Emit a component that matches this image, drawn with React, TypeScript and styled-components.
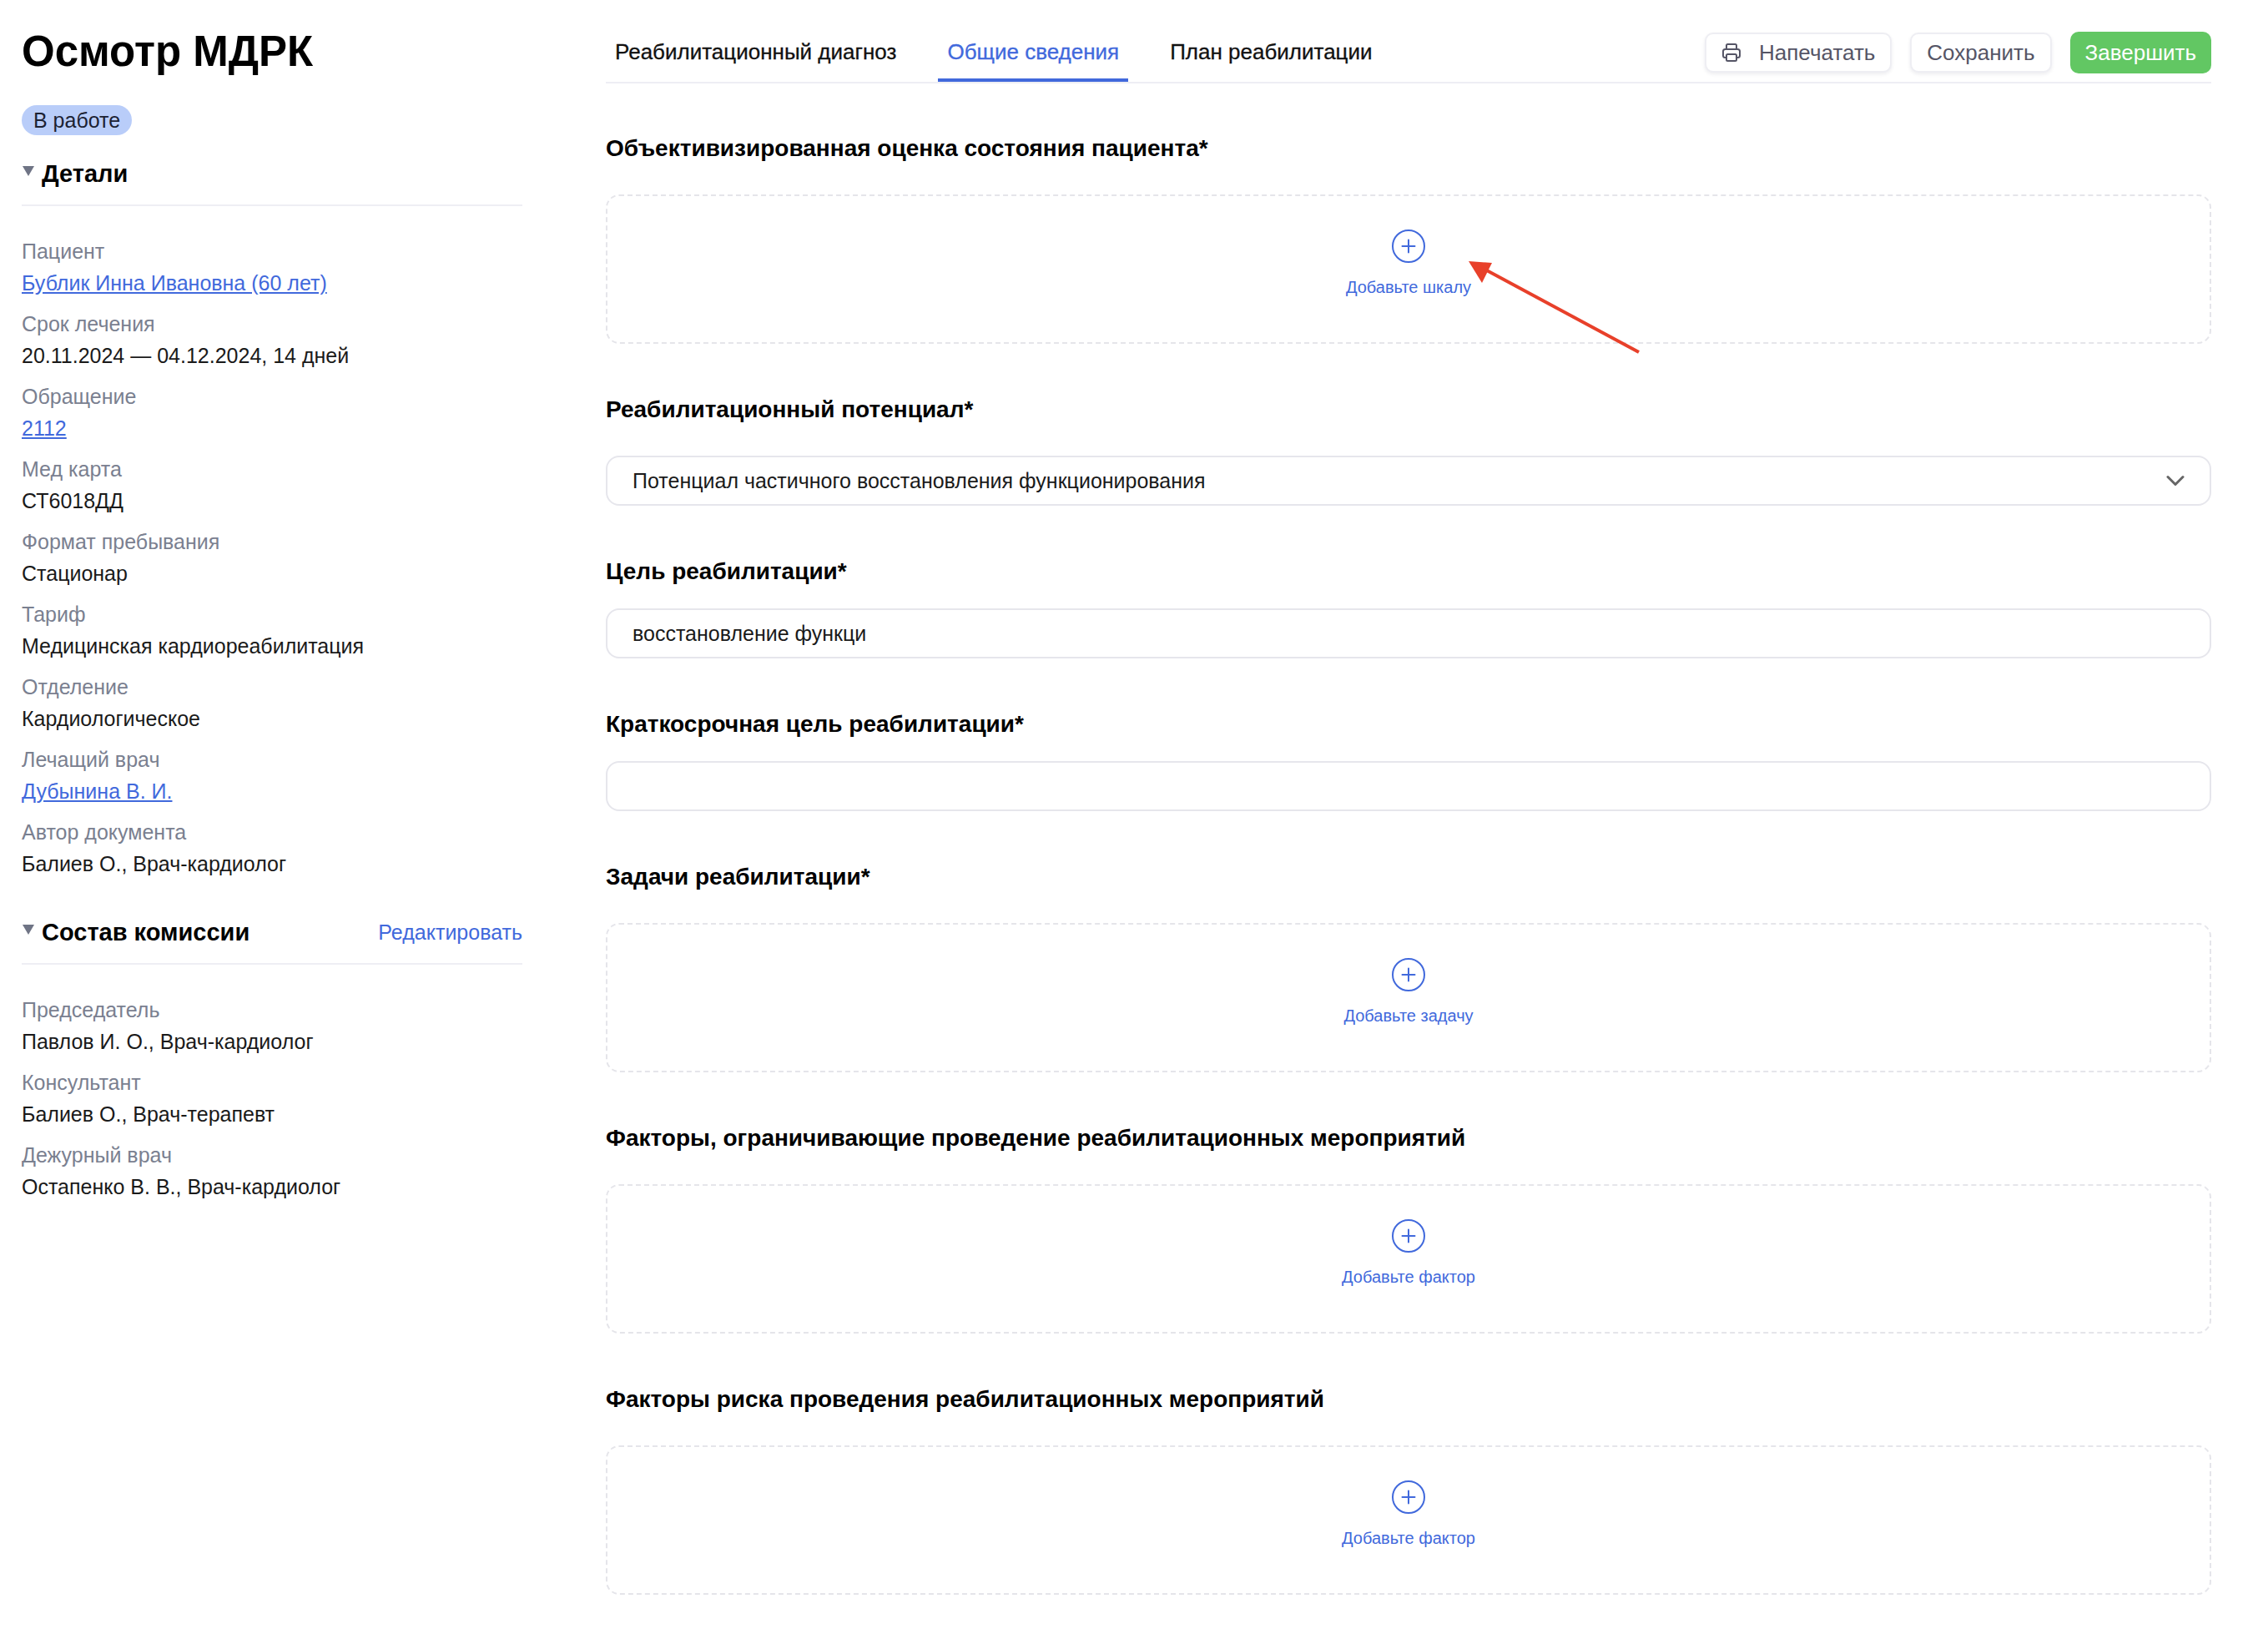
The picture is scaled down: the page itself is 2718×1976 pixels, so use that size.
import React, { FunctionComponent } from 'react';
import styled, { createGlobalStyle } from 'styled-components';

const details = [
  { label: 'Пациент', value: 'Бублик Инна Ивановна (60 лет)', link: true },
  { label: 'Срок лечения', value: '20.11.2024 — 04.12.2024, 14 дней' },
  { label: 'Обращение', value: '2112', link: true },
  { label: 'Мед карта', value: 'СТ6018ДД' },
  { label: 'Формат пребывания', value: 'Стационар' },
  { label: 'Тариф', value: 'Медицинская кардиореабилитация' },
  { label: 'Отделение', value: 'Кардиологическое' },
  { label: 'Лечащий врач', value: 'Дубынина В. И.', link: true },
  { label: 'Автор документа', value: 'Балиев О., Врач-кардиолог' },
];

const commission = [
  { label: 'Председатель', value: 'Павлов И. О., Врач-кардиолог' },
  { label: 'Консультант', value: 'Балиев О., Врач-терапевт' },
  { label: 'Дежурный врач', value: 'Остапенко В. В., Врач-кардиолог' },
];

interface FieldType {
  label: string;
  value: string;
  link?: boolean;
}

const InfoList = ({ items }: { items: FieldType[] }) => (
  <List>
    {items.map((item) => (
      <Field key={item.label}>
        <FieldLabel>{item.label}</FieldLabel>
        {item.link ? <FieldLink href="#">{item.value}</FieldLink> : <FieldValue>{item.value}</FieldValue>}
      </Field>
    ))}
  </List>
);

const AddBox = ({ text, withArrow }: { text: string; withArrow?: boolean }) => (
  <DashedBox>
    <PlusIcon viewBox="0 0 40 40">
      <circle cx="20" cy="20" r="19" fill="none" stroke="#4169dc" strokeWidth="2" />
      <path d="M20 12.5v15M12.5 20h15" stroke="#4169dc" strokeWidth="2" strokeLinecap="round" />
    </PlusIcon>
    <AddLabel>{text}</AddLabel>
    {withArrow && (
      <Arrow viewBox="0 0 210 112">
        <path d="M206 110 L20 10" stroke="#e8402a" strokeWidth="4" fill="none" />
        <path d="M2 1 L30 3 L18 27 Z" fill="#e8402a" />
      </Arrow>
    )}
  </DashedBox>
);

const App: FunctionComponent = () => {
  return (
    <Page>
      <GlobalStyle />
      <Sidebar>
        <Title>Осмотр МДРК</Title>
        <Badge>В работе</Badge>
        <SectionHead>
          <SectionName>Детали</SectionName>
        </SectionHead>
        <InfoList items={details} />
        <SectionHead $spaced>
          <SectionName>Состав комиссии</SectionName>
          <EditLink href="#">Редактировать</EditLink>
        </SectionHead>
        <InfoList items={commission} />
      </Sidebar>
      <Main>
        <TopBar>
          <Tabs>
            <Tab>Реабилитационный диагноз</Tab>
            <Tab $active>Общие сведения</Tab>
            <Tab>План реабилитации</Tab>
          </Tabs>
          <Actions>
            <Button>
              <svg width="24" height="24" viewBox="0 0 24 24" fill="none" stroke="#555566" strokeWidth="2" strokeLinejoin="round">
                <path d="M6 8V3.5A1.5 1.5 0 0 1 7.500 2h9A1.500 1.500 0 0 1 18 3.500V8" />
                <path d="M6 18H4.500A2.500 2.500 0 0 1 2 15.500v-5A2.500 2.500 0 0 1 4.500 8h15a2.500 2.500 0 0 1 2.500 2.500v5a2.500 2.500 0 0 1-2.500 2.500H18" />
                <rect x="6" y="14" width="12" height="8" rx="1.500" />
              </svg>
              Напечатать
            </Button>
            <Button>Сохранить</Button>
            <PrimaryButton>Завершить</PrimaryButton>
          </Actions>
        </TopBar>
        <Form>
          <Heading>Объективизированная оценка состояния пациента*</Heading>
          <AddBox text="Добавьте шкалу" withArrow />
          <Heading $spaced>Реабилитационный потенциал*</Heading>
          <Control>
            Потенциал частичного восстановления функционирования
            <svg width="22" height="14" viewBox="0 0 22 14" fill="none" stroke="#666" strokeWidth="3" strokeLinecap="round" strokeLinejoin="round">
              <path d="M2 2.500 L11 11.500 L20 2.500" />
            </svg>
          </Control>
          <Heading $spaced $tight>Цель реабилитации*</Heading>
          <Control>восстановление функци</Control>
          <Heading $spaced $tight>Краткосрочная цель реабилитации*</Heading>
          <Control />
          <Heading $spaced>Задачи реабилитации*</Heading>
          <AddBox text="Добавьте задачу" />
          <Heading $spaced>Факторы, ограничивающие проведение реабилитационных мероприятий</Heading>
          <AddBox text="Добавьте фактор" />
          <Heading $spaced>Факторы риска проведения реабилитационных мероприятий</Heading>
          <AddBox text="Добавьте фактор" />
        </Form>
      </Main>
    </Page>
  );
};

export default App;

const GlobalStyle = createGlobalStyle`
  html, body {
    margin: 0;
    background: #fff;
    font-family: "Liberation Sans", Arial, sans-serif;
  }
`;

const Page = styled.div`
  display: flex;
  gap: 100px;
  box-sizing: border-box;
  min-height: 1976px;
  padding: 0 68px 0 26px;
`;

const Sidebar = styled.aside`
  display: flex;
  flex-direction: column;
  align-items: flex-start;
  width: 600px;
  flex-shrink: 0;
`;

const Title = styled.h1`
  margin: 32px 0 0;
  font-size: 51px;
  line-height: 60px;
  font-weight: 700;
  color: #000;
`;

const Badge = styled.span`
  margin-top: 34px;
  padding: 0 14px;
  height: 36px;
  line-height: 36px;
  border-radius: 18px;
  background: #b9cdf9;
  color: #1c2233;
  font-size: 25px;
`;

const SectionHead = styled.div<{ $spaced?: boolean }>`
  display: flex;
  align-items: center;
  justify-content: space-between;
  box-sizing: border-box;
  width: 100%;
  height: 60px;
  margin-top: ${({ $spaced }) => ($spaced ? '42px' : '25px')};
  padding-bottom: 16px;
  border-bottom: 2px solid #eeeef4;
`;

const SectionName = styled.h2`
  position: relative;
  margin: 0;
  padding-left: 24px;
  font-size: 29px;
  line-height: 36px;
  font-weight: 700;
  color: #000;

  &::before {
    content: '';
    position: absolute;
    left: 1px;
    top: 9px;
    border-left: 7px solid transparent;
    border-right: 7px solid transparent;
    border-top: 12px solid #6f7485;
  }
`;

const EditLink = styled.a`
  color: #4169dc;
  font-size: 25px;
  text-decoration: none;
`;

const List = styled.div`
  display: flex;
  flex-direction: column;
  gap: 11px;
  margin-top: 35px;
`;

const Field = styled.div`
  display: flex;
  flex-direction: column;
  align-items: flex-start;
`;

const FieldLabel = styled.span`
  color: #7a8090;
  font-size: 25px;
  line-height: 38px;
`;

const FieldValue = styled.span`
  color: #1a1a1a;
  font-size: 25px;
  line-height: 38px;
`;

const FieldLink = styled.a`
  color: #4169dc;
  font-size: 25px;
  line-height: 38px;
  text-decoration: underline;
`;

const Main = styled.main`
  flex: 1;
  min-width: 0;
`;

const TopBar = styled.div`
  display: flex;
  align-items: flex-start;
  justify-content: space-between;
  box-sizing: border-box;
  height: 100px;
  border-bottom: 2px solid #eeeef4;
`;

const Tabs = styled.div`
  display: flex;
  gap: 39px;
  margin-bottom: -2px;
  height: 100px;
  box-sizing: border-box;
`;

const Tab = styled.div<{ $active?: boolean }>`
  box-sizing: border-box;
  height: 98px;
  padding: 42px 11px 0;
  font-size: 26px;
  line-height: 40px;
  color: ${({ $active }) => ($active ? '#4169dc' : '#111')};
  border-bottom: 4px solid ${({ $active }) => ($active ? '#4169dc' : 'transparent')};
  -webkit-text-stroke: 0.3px currentColor;
`;

const Actions = styled.div`
  display: flex;
  align-items: center;
  gap: 22px;
  height: 50px;
  margin-top: 38px;
`;

const Button = styled.button`
  display: flex;
  align-items: center;
  gap: 21px;
  box-sizing: border-box;
  height: 48px;
  padding: 0 18px;
  border: 2px solid #eeeef3;
  border-radius: 10px;
  background: #fff;
  box-shadow: 0 2px 4px rgba(30, 30, 60, 0.08);
  color: #555566;
  font-family: inherit;
  font-size: 26px;
`;

const PrimaryButton = styled(Button)`
  height: 50px;
  border: none;
  background: #62c763;
  box-shadow: none;
  color: #fff;
`;

const Form = styled.div`
  display: flex;
  flex-direction: column;
  padding-top: 60px;
`;

const Heading = styled.h3<{ $spaced?: boolean; $tight?: boolean }>`
  margin: ${({ $spaced }) => ($spaced ? '61px' : '0')} 0 ${({ $tight }) => ($tight ? '26px' : '37px')};
  font-size: 28px;
  line-height: 36px;
  font-weight: 700;
  color: #000;
`;

const DashedBox = styled.div`
  position: relative;
  display: flex;
  flex-direction: column;
  align-items: center;
  box-sizing: border-box;
  height: 179px;
  padding-top: 40px;
  border: 2px dashed #e5e5ea;
  border-radius: 16px;
`;

const PlusIcon = styled.svg`
  width: 40px;
  height: 40px;
`;

const AddLabel = styled.span`
  margin-top: 14px;
  color: #4169dc;
  font-size: 20px;
  line-height: 30px;
`;

const Arrow = styled.svg`
  position: absolute;
  left: 1030px;
  top: 77px;
  width: 210px;
  height: 112px;
`;

const Control = styled.div`
  display: flex;
  align-items: center;
  justify-content: space-between;
  box-sizing: border-box;
  height: 60px;
  padding: 0 30px;
  border: 2px solid #e6e6ec;
  border-radius: 16px;
  color: #1a1a1a;
  font-size: 25px;
`;
